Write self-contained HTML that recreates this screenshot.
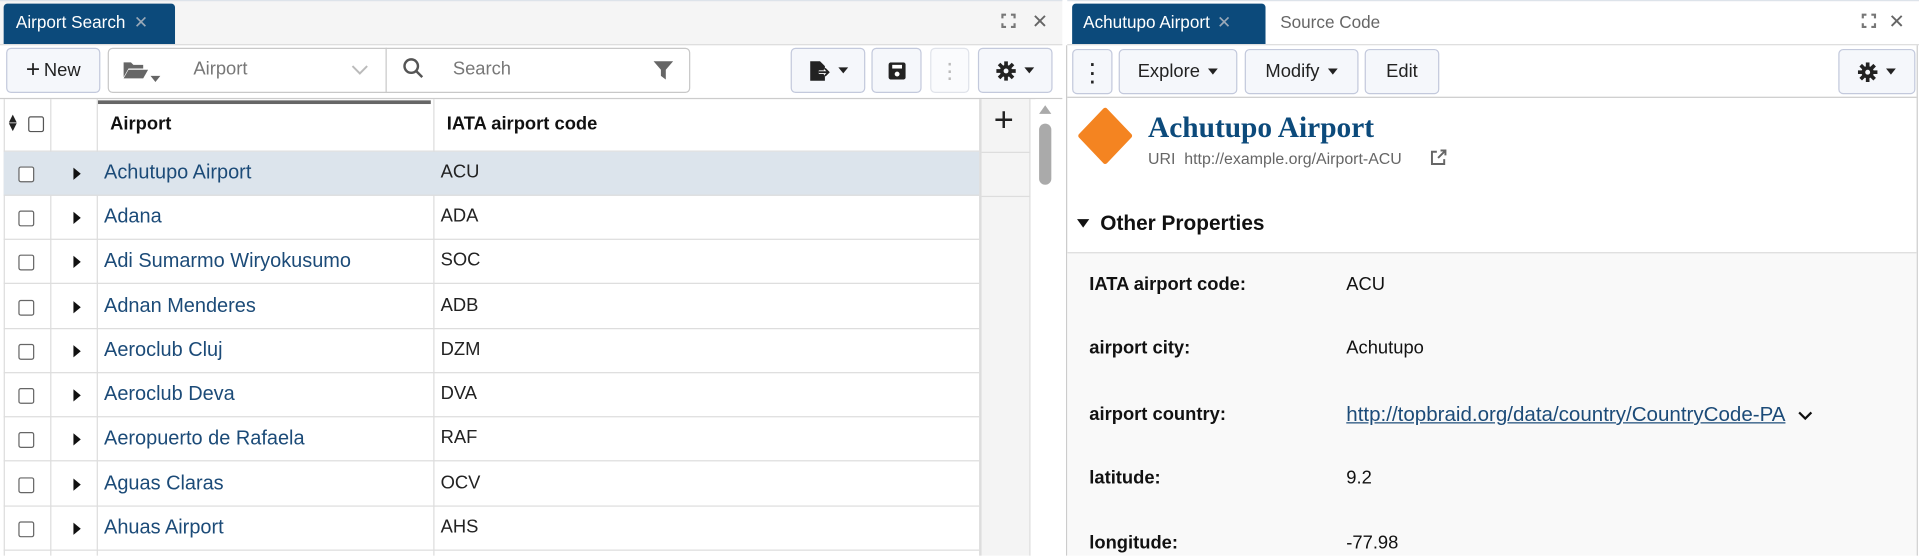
<!DOCTYPE html>
<html><head><meta charset="utf-8"><style>
*{box-sizing:border-box;margin:0;padding:0}
html,body{width:1919px;height:556px;overflow:hidden;background:#fff;font-family:"Liberation Sans",sans-serif}
#s{position:absolute;left:0;top:0;width:1568px;height:454px;transform:scale(1.2239);transform-origin:0 0;background:#fff}
.a{position:absolute}
.btn{position:absolute;background:#f5f7fb;border:1px solid #c3c9dc;border-radius:4px;font-size:15px;color:#222;display:flex;align-items:center;justify-content:center}
.tri{display:inline-block;width:0;height:0;border-left:4px solid transparent;border-right:4px solid transparent;border-top:5px solid #222;margin-left:7px}
.row{position:absolute;left:3px;width:797px;height:36px;border-bottom:1px solid #ddd;font-size:15px}
.row .cb{position:absolute;left:12px;top:12px;width:13px;height:13px;border:1px solid #666;border-radius:2px;background:#fff}
.row .ar{position:absolute;left:57px;top:13px;width:0;height:0;border-top:5px solid transparent;border-bottom:5px solid transparent;border-left:6px solid #111}
.row .n{position:absolute;left:82px;top:8px;color:#1c4b78;font-size:16.3px}
.row .c{position:absolute;left:357px;top:8px;color:#222}
.vl{position:absolute;top:81px;height:373px;width:1px;background:#ddd}
.pl{position:absolute;left:890px;font-size:15px;font-weight:bold;color:#111}
.pv{position:absolute;left:1100px;font-size:15px;color:#111}
</style></head><body><div id="s">
<svg width="0" height="0" style="position:absolute"><defs>
<g id="gear"><circle cx="8" cy="8" r="5" fill="#222"/><g stroke="#222" stroke-width="3"><path d="M8 0v16M0 8h16M2.3 2.3l11.4 11.4M13.7 2.3L2.3 13.7"/></g><circle cx="8" cy="8" r="2" fill="#f5f7fb"/></g>
<g id="exp" fill="none" stroke="#777" stroke-width="1.8"><path d="M1 4V1h3M8 1h3v3M11 8v3H8M4 11H1V8"/></g>
</defs></svg>
<!-- top bars -->
<div class="a" style="left:0;top:0;width:868px;height:37px;background:#f5f5f5;border-top:1px solid #dde3ea;border-bottom:1px solid #ddd"></div>
<div class="a" style="left:872px;top:0;width:696px;height:37px;background:#fff;border-top:1px solid #dde3ea;border-bottom:1px solid #ddd"></div>
<div class="a" style="left:3px;top:3px;width:140px;height:33px;background:#0c4a7b;border-radius:3px 3px 0 0;color:#fff;font-size:14px;padding:7px 0 0 10px">Airport Search <span style="color:#9aa9b8;margin-left:3px">✕</span></div>
<svg class="a" style="left:818px;top:11px" width="12" height="12"><use href="#exp"/></svg>
<div class="a" style="left:843px;top:8px;font-size:16px;color:#666">✕</div>
<div class="a" style="left:876px;top:3px;width:158px;height:33px;background:#0c4a7b;border-radius:3px 3px 0 0;color:#fff;font-size:14px;padding:7px 0 0 9px">Achutupo Airport <span style="color:#9aa9b8;margin-left:2px">✕</span></div>
<div class="a" style="left:1046px;top:10px;font-size:14px;color:#666">Source Code</div>
<svg class="a" style="left:1521px;top:11px" width="12" height="12"><use href="#exp"/></svg>
<div class="a" style="left:1543px;top:8px;font-size:16px;color:#666">✕</div>
<!-- left toolbar -->
<div class="a" style="left:0;top:80px;width:868px;height:1px;background:#ccc"></div>
<div class="btn" style="left:5px;top:39px;width:77px;height:37px"><span style="font-size:20px;margin-right:3px">+</span>New</div>
<div class="a" style="left:88px;top:39px;width:476px;height:37px;border:1px solid #c8c8c8;border-radius:4px"></div>
<div class="a" style="left:315px;top:39px;width:1px;height:37px;background:#c8c8c8"></div>
<svg class="a" style="left:100px;top:49px" width="22" height="16" viewBox="0 0 22 16"><path d="M1 2h6l2 2h8v3H5L1 14z" fill="#666"/><path d="M5 8h16l-4 7H1z" fill="#666"/></svg>
<div class="a" style="left:123px;top:54px"><span class="tri" style="border-top-color:#666;margin:0"></span></div>
<div class="a" style="left:158px;top:48px;font-size:15px;color:#777">Airport</div>
<svg class="a" style="left:287px;top:52px" width="14" height="10"><path d="M1 2l6 6 6-6" stroke="#bbb" stroke-width="1.6" fill="none"/></svg>
<svg class="a" style="left:329px;top:47px" width="18" height="18"><circle cx="7" cy="7" r="5.5" stroke="#555" stroke-width="2" fill="none"/><path d="M11 11l5 5" stroke="#555" stroke-width="2"/></svg>
<div class="a" style="left:370px;top:48px;font-size:15px;color:#777">Search</div>
<svg class="a" style="left:534px;top:49px" width="16" height="16"><path d="M0 1h16l-6 7v8l-4-3V8z" fill="#666"/></svg>
<div class="btn" style="left:646px;top:39px;width:61px;height:37px"><svg width="18" height="18"><path d="M2 1h8l4 4v12H2z" fill="#222"/><path d="M9 10h8M14 7l3 3-3 3" stroke="#fff" stroke-width="3" fill="none"/><path d="M9 10h8M14 7l3 3-3 3" stroke="#222" stroke-width="1.5" fill="none"/></svg><span class="tri"></span></div>
<div class="btn" style="left:712px;top:39px;width:41px;height:37px"><svg width="14" height="14"><rect x="0" y="0" width="14" height="14" rx="2" fill="#222"/><rect x="3" y="2" width="8" height="3" fill="#fff"/><circle cx="7" cy="9.5" r="2" fill="#fff"/></svg></div>
<div class="btn" style="left:760px;top:39px;width:32px;height:37px;background:#fafbfd;border-color:#e0e3ea;color:#bbb;font-size:20px;line-height:6px;flex-direction:column">·<br>·<br>·</div>
<div class="btn" style="left:799px;top:39px;width:61px;height:37px"><svg width="16" height="16"><use href="#gear"/></svg><span class="tri"></span></div>
<!-- table -->
<div class="a" style="left:3px;top:81px;width:797px;height:43px;border-bottom:1px solid #ddd"></div>
<div class="a" style="left:80px;top:82px;width:272px;height:3px;background:#666"></div>
<div class="a" style="left:5px;top:94px;font-size:11px;line-height:7px;color:#222">▲<br>▼</div>
<div class="a" style="left:23px;top:95px;width:13px;height:13px;border:1px solid #555;border-radius:2px"></div>
<div class="a" style="left:90px;top:93px;font-size:15px;font-weight:bold;color:#111">Airport</div>
<div class="a" style="left:365px;top:93px;font-size:15px;font-weight:bold;color:#111">IATA airport code</div>
<div class="vl" style="left:3px"></div><div class="vl" style="left:41px"></div><div class="vl" style="left:79px"></div><div class="vl" style="left:354px"></div>
<div class="a" style="left:800px;top:81px;width:42px;height:373px;background:#f4f4f4;border-left:2px solid #ddd;border-right:1px solid #ddd"></div>
<div class="a" style="left:812px;top:82px;font-size:28px;color:#222;font-weight:300">+</div>
<div class="a" style="left:802px;top:124px;width:40px;height:1px;background:#ddd"></div>
<div class="a" style="left:802px;top:160px;width:40px;height:1px;background:#ddd"></div>
<div class="a" style="left:846px;top:81px;width:20px;height:373px;background:#fff"></div>
<div class="a" style="left:849px;top:86px;width:0;height:0;border-left:5px solid transparent;border-right:5px solid transparent;border-bottom:7px solid #aaa"></div>
<div class="a" style="left:849px;top:101px;width:10px;height:50px;background:#aaa;border-radius:5px"></div>
<div class="row" style="top:124px;background:#dce4ec"><div class="cb"></div><div class="ar"></div><div class="n">Achutupo Airport</div><div class="c">ACU</div></div>
<div class="row" style="top:160px"><div class="cb"></div><div class="ar"></div><div class="n">Adana</div><div class="c">ADA</div></div>
<div class="row" style="top:196px"><div class="cb"></div><div class="ar"></div><div class="n">Adi Sumarmo Wiryokusumo</div><div class="c">SOC</div></div>
<div class="row" style="top:233px"><div class="cb"></div><div class="ar"></div><div class="n">Adnan Menderes</div><div class="c">ADB</div></div>
<div class="row" style="top:269px"><div class="cb"></div><div class="ar"></div><div class="n">Aeroclub Cluj</div><div class="c">DZM</div></div>
<div class="row" style="top:305px"><div class="cb"></div><div class="ar"></div><div class="n">Aeroclub Deva</div><div class="c">DVA</div></div>
<div class="row" style="top:341px"><div class="cb"></div><div class="ar"></div><div class="n">Aeropuerto de Rafaela</div><div class="c">RAF</div></div>
<div class="row" style="top:378px"><div class="cb"></div><div class="ar"></div><div class="n">Aguas Claras</div><div class="c">OCV</div></div>
<div class="row" style="top:414px"><div class="cb"></div><div class="ar"></div><div class="n">Ahuas Airport</div><div class="c">AHS</div></div>
<!-- right panel -->
<div class="a" style="left:871px;top:37px;width:1px;height:417px;background:#ccc"></div>
<div class="a" style="left:1566px;top:37px;width:1px;height:417px;background:#ccc"></div>
<div class="a" style="left:872px;top:79px;width:694px;height:1px;background:#ccc"></div>
<div class="btn" style="left:876px;top:40px;width:33px;height:37px;font-size:22px;line-height:7px;flex-direction:column">·<br>·<br>·</div>
<div class="btn" style="left:914px;top:40px;width:97px;height:37px">Explore<span class="tri"></span></div>
<div class="btn" style="left:1017px;top:40px;width:93px;height:37px">Modify<span class="tri"></span></div>
<div class="btn" style="left:1115px;top:40px;width:61px;height:37px">Edit</div>
<div class="btn" style="left:1502px;top:40px;width:63px;height:37px"><svg width="16" height="16"><use href="#gear"/></svg><span class="tri"></span></div>
<svg class="a" style="left:879px;top:87px" width="48" height="48"><path d="M24 3L44 24 24 45 4 24z" fill="#f48421" stroke="#f48421" stroke-width="4" stroke-linejoin="round"/></svg>
<div class="a" style="left:938px;top:92px;font-family:'Liberation Serif',serif;font-weight:bold;font-size:24px;color:#0c4a7b">Achutupo Airport</div>
<div class="a" style="left:938px;top:122px;font-size:13px;color:#666">URI&nbsp; http://example.org/Airport-ACU</div>
<svg class="a" style="left:1168px;top:122px" width="14" height="14"><path d="M6 2H2v10h10V8" stroke="#666" stroke-width="1.6" fill="none"/><path d="M7 7l6-6M9 1h4v4" stroke="#666" stroke-width="1.6" fill="none"/></svg>
<div class="a" style="left:872px;top:206px;width:694px;height:248px;background:#f9f9f9;border-top:1px solid #ddd"></div>
<div class="a" style="left:880px;top:179px;width:0;height:0;border-left:5px solid transparent;border-right:5px solid transparent;border-top:7px solid #111"></div>
<div class="a" style="left:899px;top:173px;font-size:17px;font-weight:bold;color:#111">Other Properties</div>
<div class="pl" style="top:224px">IATA airport code:</div><div class="pv" style="top:224px">ACU</div>
<div class="pl" style="top:276px">airport city:</div><div class="pv" style="top:276px">Achutupo</div>
<div class="pl" style="top:330px">airport country:</div><div class="pv" style="top:329px;font-size:16.8px;color:#1c4b78;text-decoration:underline">http://topbraid.org/data/country/CountryCode-PA</div>
<svg class="a" style="left:1469px;top:335px" width="12" height="9"><path d="M1 2l5 5 5-5" stroke="#111" stroke-width="1.8" fill="none"/></svg>
<div class="pl" style="top:382px">latitude:</div><div class="pv" style="top:382px">9.2</div>
<div class="pl" style="top:435px">longitude:</div><div class="pv" style="top:435px">-77.98</div>
</div></body></html>
